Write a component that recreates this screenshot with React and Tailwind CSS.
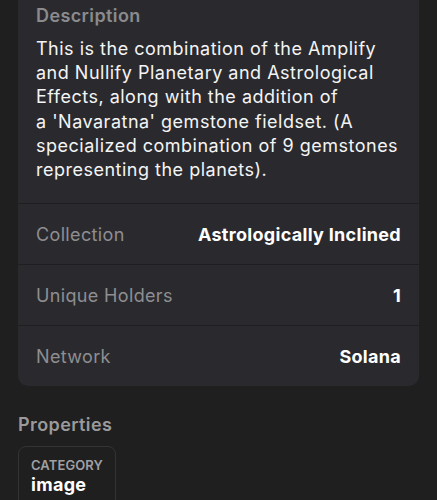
import React from 'react';

const rows = [
  { label: 'Collection', value: 'Astrologically Inclined' },
  { label: 'Unique Holders', value: '1' },
  { label: 'Network', value: 'Solana' },
];

const App = () => {
  return (
    <div className="min-h-screen bg-[#1f1f1f] px-[18px] text-white" style={{ fontFamily: 'Inter, "Noto Sans", sans-serif' }}>
      <div className="rounded-b-[10px] bg-[#2a2a2e]">
        <div className="px-[18px] pt-[4px] pb-[21px]">
          <h3 className="text-[18px] leading-[24px] font-semibold tracking-[0.4px] text-[#8b8b8e]">Description</h3>
          <p className="mt-[9px] text-[18px] leading-[24.2px] tracking-[0.5px] text-[#f4f4f5]">
            This is the combination of the Amplify and Nullify Planetary and Astrological Effects, along with the addition of{' '}
            <br />
            a&nbsp;'Navaratna' gemstone fieldset. (A specialized combination of 9 gemstones representing the planets).
          </p>
        </div>
        {rows.map(r => (
          <div key={r.label} className="flex h-[61px] items-center justify-between border-t border-[#1f1f21] px-[18px]">
            <span className="text-[18px] tracking-[0.35px] text-[#8e8e92]">{r.label}</span>
            <span className="text-[18px] font-bold tracking-[0.3px] text-white">{r.value}</span>
          </div>
        ))}
      </div>

      <h3 className="mt-[27px] text-[18px] leading-[24px] font-semibold tracking-[0.4px] text-[#9a9a9c]">Properties</h3>
      <div className="mt-[9px] inline-flex flex-col rounded-[8px] border border-[#333336] px-[12px] pt-[10px] pb-[10px]">
        <span className="text-[13px] leading-[16px] font-semibold uppercase tracking-[0.1px] text-[#a0a0a3]">Category</span>
        <span className="text-[18px] leading-[24px] font-bold tracking-[0.3px] text-white">image</span>
      </div>
    </div>
  );
};

export default App;
